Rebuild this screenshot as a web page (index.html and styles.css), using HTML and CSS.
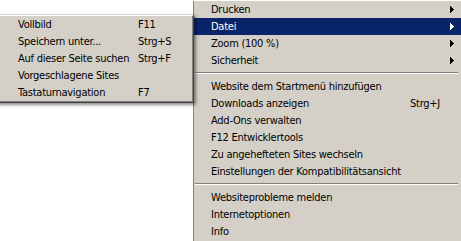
FILE: index.html
```html
<!DOCTYPE html>
<html lang="de">
<head>
<meta charset="utf-8">
<title>Menü</title>
<link rel="stylesheet" href="styles.css">
</head>
<body>
<div class="menu main">
  <div class="item"><span class="label">Drucken</span><span class="key"></span><svg class="arrow" width="4" height="7" viewBox="0 0 4 7"><path d="M0 0h1v7h-1zM1 1h1v5h-1zM2 2h1v3h-1zM3 3h1v1h-1z"/></svg></div>
  <div class="item active"><span class="label">Datei</span><span class="key"></span><svg class="arrow" width="4" height="7" viewBox="0 0 4 7"><path d="M0 0h1v7h-1zM1 1h1v5h-1zM2 2h1v3h-1zM3 3h1v1h-1z"/></svg></div>
  <div class="item"><span class="label">Zoom (100 %)</span><span class="key"></span><svg class="arrow" width="4" height="7" viewBox="0 0 4 7"><path d="M0 0h1v7h-1zM1 1h1v5h-1zM2 2h1v3h-1zM3 3h1v1h-1z"/></svg></div>
  <div class="item"><span class="label">Sicherheit</span><span class="key"></span><svg class="arrow" width="4" height="7" viewBox="0 0 4 7"><path d="M0 0h1v7h-1zM1 1h1v5h-1zM2 2h1v3h-1zM3 3h1v1h-1z"/></svg></div>
  <div class="sep"></div>
  <div class="item"><span class="label">Website dem Startmenü hinzufügen</span></div>
  <div class="item"><span class="label">Downloads anzeigen</span><span class="key">Strg+J</span></div>
  <div class="item"><span class="label">Add-Ons verwalten</span></div>
  <div class="item"><span class="label">F12 Entwicklertools</span></div>
  <div class="item"><span class="label">Zu angehefteten Sites wechseln</span></div>
  <div class="item"><span class="label">Einstellungen der Kompatibilitätsansicht</span></div>
  <div class="sep"></div>
  <div class="item"><span class="label">Websiteprobleme melden</span></div>
  <div class="item"><span class="label">Internetoptionen</span></div>
  <div class="item"><span class="label">Info</span></div>
</div>

<div class="menu sub">
  <div class="sitem"><span class="label">Vollbild</span><span class="key">F11</span></div>
  <div class="sitem"><span class="label">Speichern unter...</span><span class="key">Strg+S</span></div>
  <div class="sitem"><span class="label">Auf dieser Seite suchen</span><span class="key">Strg+F</span></div>
  <div class="sitem"><span class="label">Vorgeschlagene Sites</span><span class="key"></span></div>
  <div class="sitem"><span class="label">Tastaturnavigation</span><span class="key">F7</span></div>
</div>
</body>
</html>
```

FILE: styles.css
```css
html, body {
  margin: 0;
  padding: 0;
  background: #ffffff;
  overflow: hidden;
  width: 461px;
  height: 241px;
}

body {
  position: relative;
  font-family: "DejaVu Sans Condensed", "Liberation Sans", sans-serif;
  font-stretch: condensed;
  font-size: 11px;
  letter-spacing: -0.25px;
  color: #000000;
}

.menu {
  background: #d4d0c8;
  box-sizing: border-box;
}

.main {
  margin: 1px 0 0 193px;
  width: 272px;
  border-left: 1px solid #808080;
  padding-bottom: 4px;
}

.item {
  display: grid;
  grid-template-columns: 199px 1fr 4px;
  align-items: center;
  height: 17px;
  line-height: 17px;
  padding: 0 11px 0 17px;
  white-space: nowrap;
}

.item.active {
  background: #0a246a;
  color: #ffffff;
}

.arrow {
  display: block;
  fill: currentColor;
  shape-rendering: crispEdges;
}

.sep {
  height: 0;
  margin: 3px 7px 4px 1px;
  border-top: 1px solid #808080;
  border-bottom: 1px solid #ffffff;
}

.sub {
  position: absolute;
  left: -4px;
  top: 14px;
  width: 198px;
  border-style: solid;
  border-width: 1px;
  border-color: #d4d0c8 #404040 #404040 #d4d0c8;
  box-shadow: inset 1px 1px 0 #ffffff, inset -1px -1px 0 #808080, 2px 2px 3px rgba(0, 0, 0, 0.45);
  padding: 1px 0 1px;
}

.sitem {
  display: grid;
  grid-template-columns: 120px 1fr;
  height: 17px;
  line-height: 17px;
  padding-left: 21px;
  white-space: nowrap;
}
```
